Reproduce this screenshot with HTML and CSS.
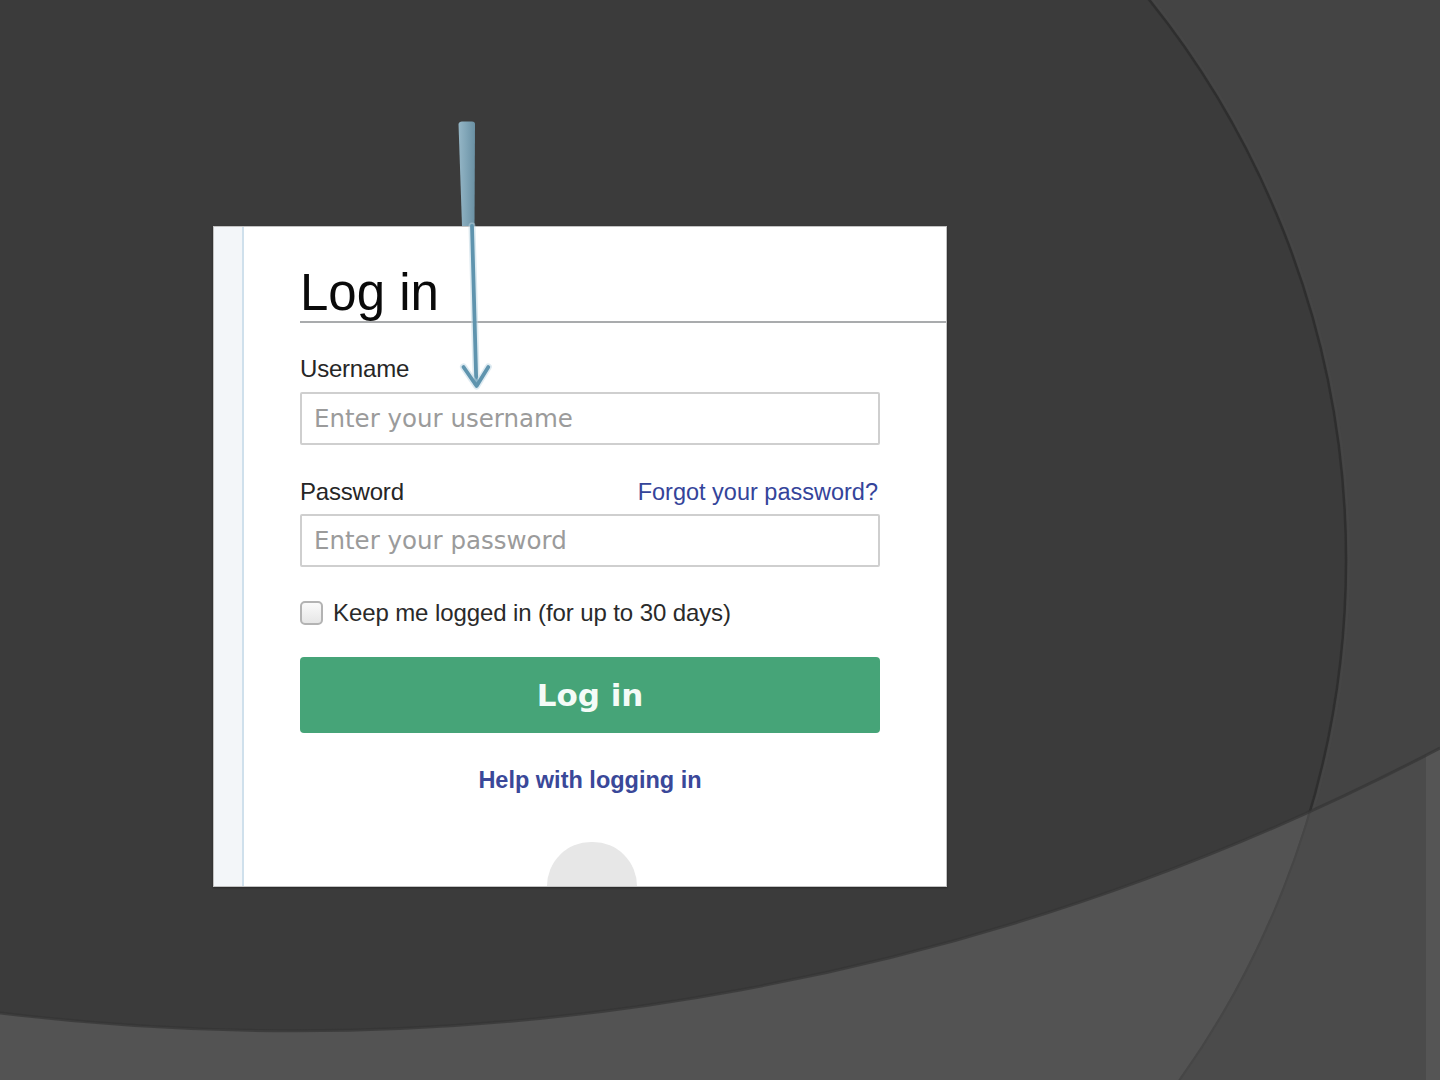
FILE: index.html
```html
<!DOCTYPE html>
<html lang="en">
<head>
<meta charset="utf-8">
<title>Log in</title>
<link rel="stylesheet" href="styles.css">
</head>
<body>
<div class="slide">
  <svg class="bg" viewBox="0 0 1440 1080" width="1440" height="1080" aria-hidden="true">
    <defs>
      <clipPath id="band"><path d="M0,1013 A2464,2464 0 0 0 1440,748 L1440,1080 L0,1080 Z"/></clipPath>
    </defs>
    <rect width="1440" height="1080" fill="#444444"/>
    <circle cx="451" cy="560" r="894" fill="#3b3b3b"/>
    <circle cx="451" cy="560" r="895" fill="none" stroke="#2e2e2e" stroke-width="2.5"/>
    <circle cx="451" cy="560" r="898" fill="none" stroke="#474747" stroke-width="2" opacity="0.6"/>
    <path d="M0,1013 A2464,2464 0 0 0 1440,748 L1440,1080 L0,1080 Z" fill="#4b4b4b"/>
    <g clip-path="url(#band)">
      <circle cx="451" cy="560" r="894" fill="#535353"/>
      <circle cx="451" cy="560" r="895" fill="none" stroke="#464646" stroke-width="2"/>
      <rect x="1426" y="700" width="14" height="380" fill="#555555"/>
    </g>
    <path d="M0,1013 A2464,2464 0 0 0 1440,748" fill="none" stroke="#353535" stroke-width="3" opacity="0.7"/>
  </svg>

  <div class="stage">
    <div class="card">
      <div class="rail"></div>
      <div class="main">
        <h1 class="title">Log in</h1>
        <div class="form">
          <div class="label">Username</div>
          <div class="field"><span class="ph">Enter your username</span></div>

          <div class="label-row">
            <span class="label">Password</span>
            <span class="link">Forgot your password?</span>
          </div>
          <div class="field field-pw"><span class="ph">Enter your password</span></div>

          <div class="check-row">
            <span class="box"></span>
            <span class="check-text">Keep me logged in (for up to 30 days)</span>
          </div>

          <div class="btn">Log in</div>

          <div class="help">Help with logging in</div>
        </div>
        <div class="bump"></div>
      </div>
    </div>

    <svg class="arrow" viewBox="0 0 50 280" width="50" height="280" aria-hidden="true">
      <defs>
        <linearGradient id="shaft" x1="0" y1="0" x2="1" y2="0">
          <stop offset="0" stop-color="#95b6c6"/>
          <stop offset="0.5" stop-color="#7fa4b6"/>
          <stop offset="1" stop-color="#6a90a3"/>
        </linearGradient>
      </defs>
      <path d="M8.5,9 Q9,6.5 12,6.5 L22,6.5 Q25,6.5 25,9 L24.5,111 L12,111 Z" fill="url(#shaft)"/>
      <line x1="22" y1="111" x2="26.3" y2="268" stroke="#bcd6e3" stroke-width="7" stroke-linecap="round" opacity="0.5"/>
      <line x1="22" y1="111" x2="26.3" y2="268" stroke="#5f94ae" stroke-width="3.8" stroke-linecap="round"/>
      <polyline points="13.5,252 26.6,271 38.3,252" fill="none" stroke="#bcd6e3" stroke-width="7" stroke-linecap="round" stroke-linejoin="round" opacity="0.5"/>
      <polyline points="13.5,252 26.6,271 38.3,252" fill="none" stroke="#5f94ae" stroke-width="3.8" stroke-linecap="round" stroke-linejoin="round"/>
    </svg>
  </div>
</div>
</body>
</html>
```

FILE: styles.css
```css
* {
  box-sizing: border-box;
}

html, body {
  margin: 0;
  padding: 0;
  background: #3b3b3b;
}

body {
  font-family: "Liberation Sans", Arial, sans-serif;
}

.slide {
  width: 1440px;
  height: 1080px;
  display: grid;
  overflow: hidden;
}

.bg {
  grid-area: 1 / 1;
  display: block;
}

.stage {
  grid-area: 1 / 1;
  position: relative;
  padding: 226px 0 0 213px;
}

.card {
  width: 734px;
  height: 661px;
  background: #ffffff;
  border: 1px solid #c2c2c2;
  display: flex;
  box-shadow: 0 1px 2px rgba(0, 0, 0, 0.35);
}

.rail {
  width: 30px;
  flex: none;
  background: #f3f6f9;
  border-right: 2px solid #cfe0ec;
}

.main {
  flex: 1;
  display: flex;
  flex-direction: column;
  padding-left: 56px;
}

.title {
  margin: 38px 0 0 0;
  font-size: 51px;
  line-height: 56px;
  font-weight: normal;
  color: #0a0a0a;
  border-bottom: 2px solid #a9abad;
}

.form {
  width: 580px;
  display: flex;
  flex-direction: column;
}

.label {
  font-size: 24px;
  line-height: 28px;
  color: #262626;
  letter-spacing: -0.2px;
}

.form > .label {
  margin-top: 32px;
}

.label-row {
  margin-top: 33px;
  display: flex;
  justify-content: space-between;
  align-items: baseline;
}

.link {
  font-size: 23.5px;
  line-height: 28px;
  color: #34449a;
  margin-right: 2px;
}

.field {
  margin-top: 9px;
  height: 53px;
  border: 2px solid #cfcfcf;
  border-radius: 2px;
  display: flex;
  align-items: center;
  padding-left: 12px;
}

.field-pw {
  margin-top: 8px;
}

.ph {
  font-family: "DejaVu Sans", sans-serif;
  font-size: 24.5px;
  color: #9b9b9b;
}

.check-row {
  margin-top: 32px;
  height: 28px;
  display: flex;
  align-items: center;
  gap: 10px;
}

.box {
  width: 23px;
  height: 24px;
  border: 2px solid #b3b3b3;
  border-radius: 5px;
  background: linear-gradient(#fafafa, #e6e6e6);
  flex: none;
}

.check-text {
  font-size: 24px;
  line-height: 28px;
  color: #2a2a2a;
  letter-spacing: -0.1px;
}

.btn {
  margin-top: 30px;
  height: 76px;
  background: #46a478;
  border-radius: 4px;
  display: flex;
  align-items: center;
  justify-content: center;
  font-family: "DejaVu Sans", sans-serif;
  font-weight: bold;
  font-size: 31px;
  color: #f4fbf7;
}

.help {
  margin-top: 33px;
  text-align: center;
  font-size: 23.5px;
  line-height: 28px;
  font-weight: bold;
  color: #3a4899;
}

.bump {
  margin-top: auto;
  margin-left: 247px;
  width: 90px;
  height: 44px;
  border-radius: 45px 45px 0 0;
  background: #e7e7e7;
}

.arrow {
  position: absolute;
  left: 450px;
  top: 115px;
  display: block;
}
```
